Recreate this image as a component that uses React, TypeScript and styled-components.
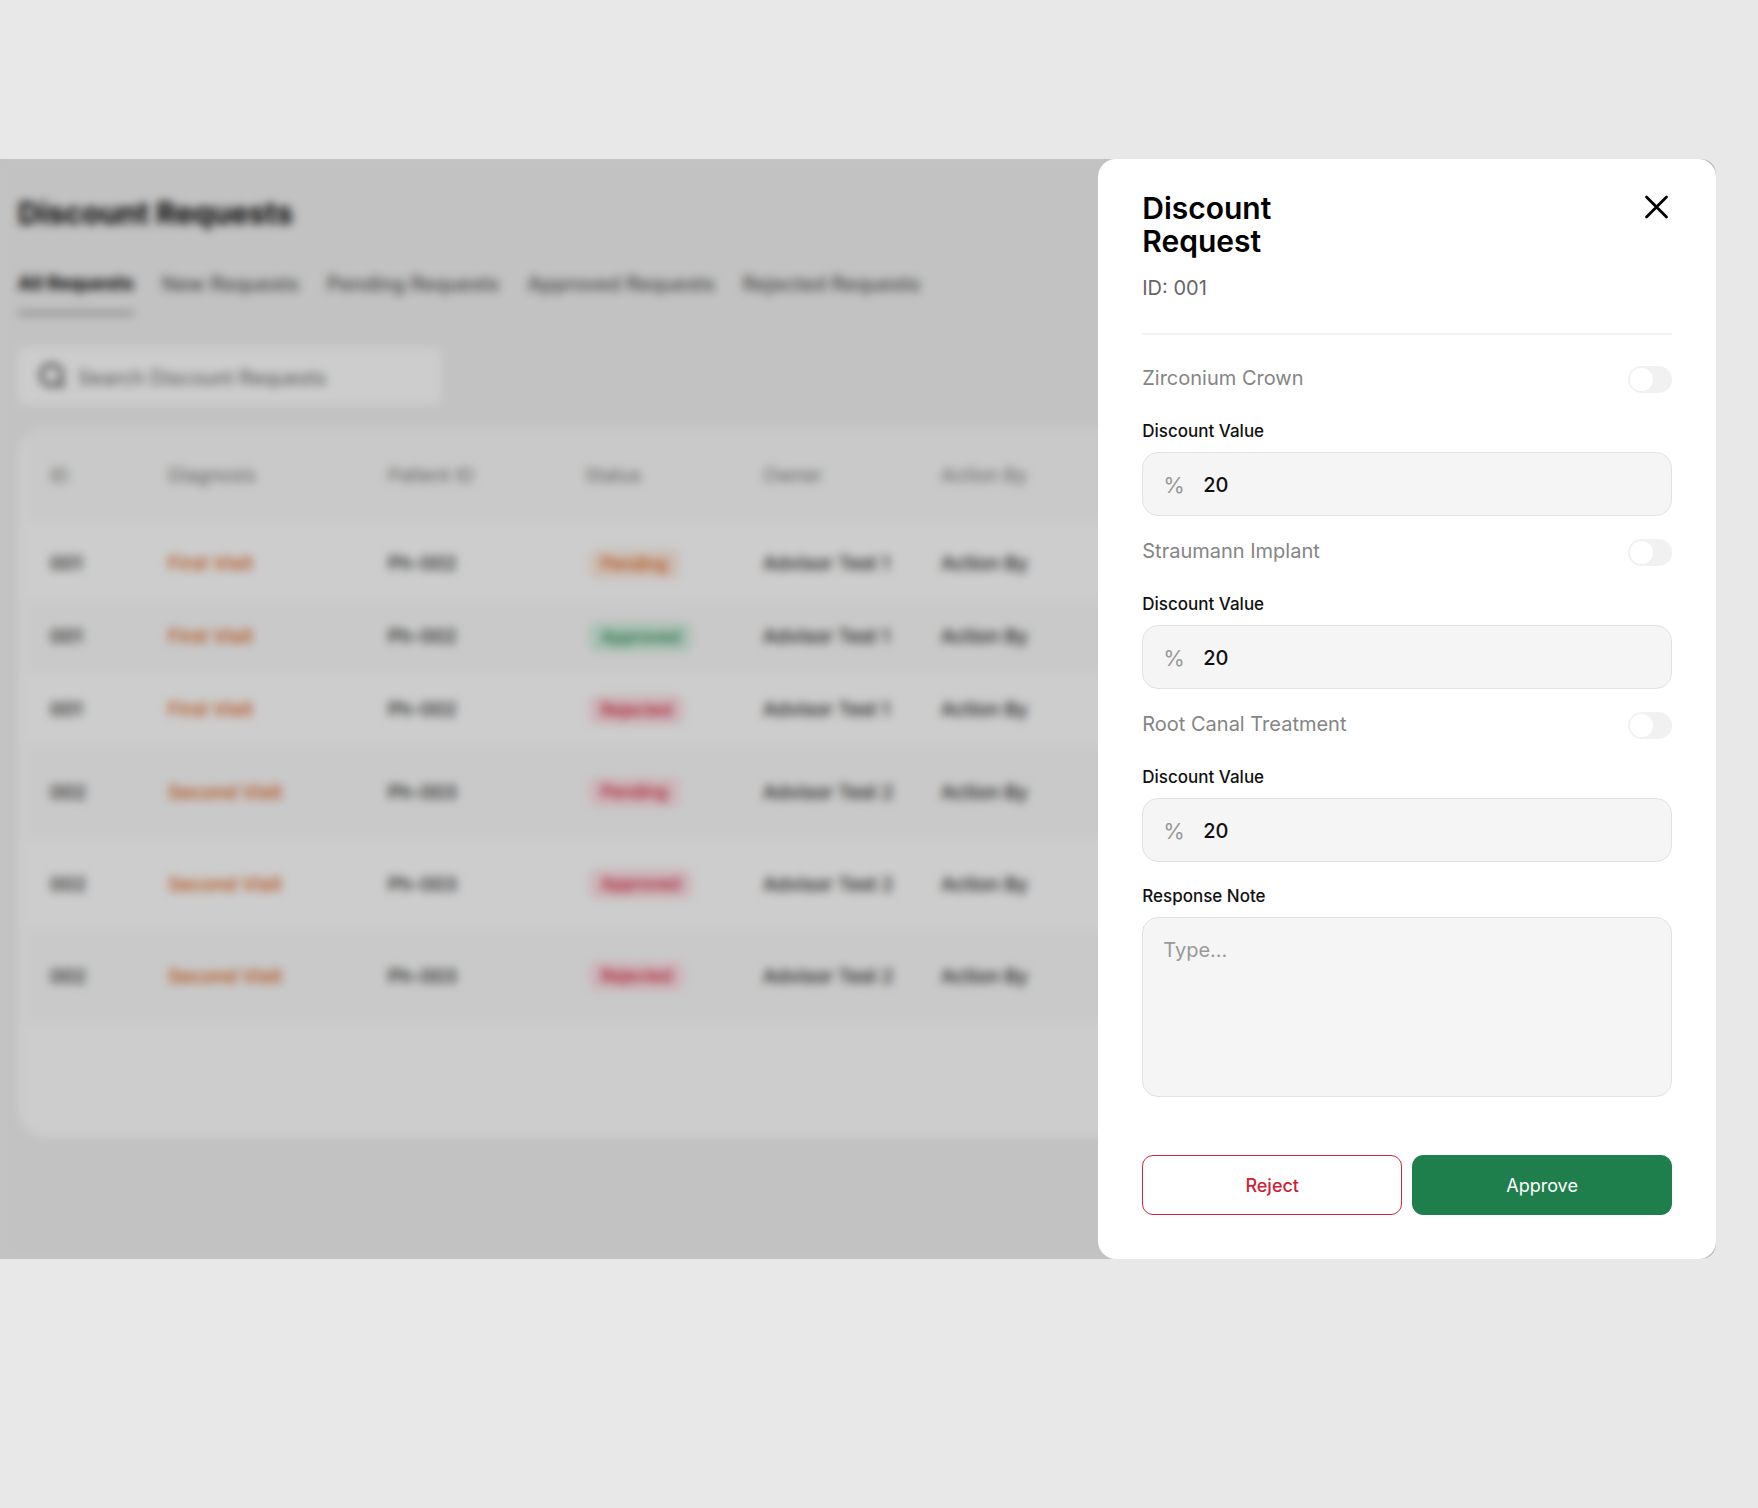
import React, { useState } from "react";
import styled, { createGlobalStyle } from "styled-components";

const GlobalStyle = createGlobalStyle`
  *, *::before, *::after { box-sizing: border-box; }
  body { margin: 0; background: #e8e8e8; }
  body, button, input, textarea { font-family: Inter, "Liberation Sans", sans-serif; }
`;

const Stage = styled.div`
  padding: 159px 42px 159px 0;
`;

const Frame = styled.div`
  display: grid;
  position: relative;
  overflow: hidden;
  background: #efefef;
  border-radius: 0 14px 14px 0;
`;

const Page = styled.main`
  grid-area: 1 / 1;
  min-width: 0;
  padding: 34px 18px 0;
`;

const PageTitle = styled.h1`
  margin: 0 0 39px;
  font-size: 30px;
  line-height: 40px;
  font-weight: 700;
  color: #000;
`;

const Tabs = styled.nav`
  display: flex;
  gap: 28px;
  margin-bottom: 32px;
`;

const Tab = styled.button<{ $active?: boolean }>`
  padding: 0 0 15px;
  border: 0;
  border-bottom: 4px solid ${(p) => (p.$active ? "#a4a4a4" : "transparent")};
  background: none;
  font-size: ${(p) => (p.$active ? 19 : 20)}px;
  line-height: 24px;
  font-weight: ${(p) => (p.$active ? 700 : 500)};
  color: ${(p) => (p.$active ? "#000" : "#555")};
  white-space: nowrap;
`;

const SearchBox = styled.label`
  display: flex;
  align-items: center;
  gap: 12px;
  width: 423px;
  height: 58px;
  margin-bottom: 22px;
  padding: 0 20px;
  border-radius: 8px;
  background: #fdfdfd;
  color: #3c3c3c;
`;

const SearchInput = styled.input`
  flex: 1;
  min-width: 0;
  padding: 3px 0 0;
  border: 0;
  background: none;
  font-size: 20px;
  &::placeholder { color: #666; opacity: 1; }
`;

const Card = styled.section`
  padding: 0 8px 115px;
  border-radius: 28px;
  background: #fdfdfd;
  overflow: hidden;
`;

const Table = styled.table`
  width: 100%;
  table-layout: fixed;
  border-spacing: 0;
  font-size: 19px;
  text-align: left;
`;

const Col = styled.col<{ $width?: number }>`
  width: ${(p) => (p.$width ? `${p.$width}px` : "auto")};
`;

const HeadCell = styled.th`
  height: 100px;
  padding: 0 0 0 24px;
  border-bottom: 4px solid #fdfdfd;
  background: #f8f8f8;
  font-weight: 400;
  color: #777;
`;

const Row = styled.tr<{ $tall?: boolean }>`
  height: ${(p) => (p.$tall ? 92 : 73)}px;
  &:nth-child(even) { background: #f8f8f8; }
`;

const Cell = styled.td<{ $accent?: boolean }>`
  padding: 0 0 0 24px;
  font-weight: 500;
  color: ${(p) => (p.$accent ? "#d9560b" : "#222")};
`;

type Tone = "orange" | "green" | "red";
const tones: Record<Tone, [string, string]> = {
  orange: ["#d9560b", "#fbeadf"],
  green: ["#1f7f4c", "#d2eedf"],
  red: ["#d0122f", "#fbdfe4"],
};

const Pill = styled.span<{ $tone: Tone }>`
  display: inline-block;
  margin-left: 4px;
  padding: 4px 12px;
  border-radius: 8px;
  font-size: 17px;
  line-height: 22px;
  color: ${(p) => tones[p.$tone][0]};
  background: ${(p) => tones[p.$tone][1]};
`;

const Scrim = styled.div`
  position: absolute;
  inset: 0;
  background: rgba(0, 0, 0, 0.19);
  backdrop-filter: blur(5px);
`;

const Drawer = styled.aside`
  grid-area: 1 / 1;
  justify-self: end;
  position: relative;
  width: 36%;
  padding: 33px 44px 44px;
  border-radius: 18px;
  background: #fff;
`;

const DrawerHead = styled.header`
  display: flex;
  justify-content: space-between;
  align-items: flex-start;
  padding-bottom: 33px;
  border-bottom: 2px solid #f3f3f3;
  margin-bottom: 31px;
`;

const DrawerTitle = styled.h2`
  max-width: 160px;
  margin: 0 0 18px;
  font-size: 30px;
  line-height: 33px;
  font-weight: 600;
  color: #000;
`;

const RequestId = styled.p`
  margin: 0;
  font-size: 20px;
  line-height: 24px;
  color: #666;
`;

const CloseButton = styled.button`
  display: flex;
  margin: 0;
  padding: 1px 2px;
  border: 0;
  background: none;
  color: #000;
`;

const Treatment = styled.section`
  margin-bottom: 23px;
`;

const SwitchRow = styled.label`
  display: flex;
  justify-content: space-between;
  align-items: flex-start;
  height: 27px;
  margin-bottom: 27px;
  font-size: 20px;
  line-height: 24px;
  color: #858585;
`;

const Switch = styled.input`
  appearance: none;
  width: 44px;
  height: 27px;
  margin: 0;
  padding: 2px;
  border-radius: 14px;
  background: #f1f1f1;
  &::before {
    content: "";
    display: block;
    width: 23px;
    height: 23px;
    border-radius: 50%;
    background: #fff;
  }
  &:checked { background: #1f7f4c; }
  &:checked::before { margin-left: auto; }
`;

const FieldLabel = styled.label`
  display: block;
  margin-bottom: 10px;
  font-size: 17px;
  line-height: 22px;
  font-weight: 500;
  color: #111;
`;

const ValueBox = styled.div`
  display: flex;
  align-items: center;
  gap: 16px;
  height: 64px;
  padding: 2px 20px 0;
  border: 1px solid #e2e2e2;
  border-radius: 16px;
  background: #f5f5f5;
`;

const Unit = styled.span`
  width: 24px;
  font-size: 22px;
  color: #999;
`;

const ValueInput = styled.input`
  flex: 1;
  min-width: 0;
  padding: 0;
  border: 0;
  background: none;
  font-size: 20px;
  font-weight: 500;
  color: #111;
`;

const NoteInput = styled.textarea`
  display: block;
  width: 100%;
  height: 180px;
  margin-bottom: 58px;
  padding: 20px;
  border: 1px solid #e2e2e2;
  border-radius: 16px;
  background: #f5f5f5;
  font-size: 20px;
  line-height: 24px;
  resize: none;
  &::placeholder { color: #999; opacity: 1; }
`;

const Actions = styled.footer`
  display: grid;
  grid-template-columns: 1fr 1fr;
  gap: 10px;
`;

const ActionButton = styled.button<{ $primary?: boolean }>`
  height: 60px;
  border: 1px solid ${(p) => (p.$primary ? "#1f7f4c" : "#c8283f")};
  border-radius: 11px;
  background: ${(p) => (p.$primary ? "#1f7f4c" : "#fff")};
  font-size: 18px;
  font-weight: ${(p) => (p.$primary ? 400 : 500)};
  color: ${(p) => (p.$primary ? "#fff" : "#cc2238")};
`;

const tabs = ["All Requests", "New Requests", "Pending Requests", "Approved Requests", "Rejected Requests"];
const columns = ["ID", "Diagnosis", "Patient ID", "Status", "Owner", "Action By"];
const widths = [118, 220, 197, 178, 178];
const treatments = ["Zirconium Crown", "Straumann Implant", "Root Canal Treatment"];

const rows: { id: string; visit: string; patient: string; status: string; tone: Tone; owner: string }[] = [
  { id: "001", visit: "First Visit", patient: "Ph-002", status: "Pending", tone: "orange", owner: "Advisor Test 1" },
  { id: "001", visit: "First Visit", patient: "Ph-002", status: "Approved", tone: "green", owner: "Advisor Test 1" },
  { id: "001", visit: "First Visit", patient: "Ph-002", status: "Rejected", tone: "red", owner: "Advisor Test 1" },
  { id: "002", visit: "Second Visit", patient: "Ph-003", status: "Pending", tone: "red", owner: "Advisor Test 2" },
  { id: "002", visit: "Second Visit", patient: "Ph-003", status: "Approved", tone: "red", owner: "Advisor Test 2" },
  { id: "002", visit: "Second Visit", patient: "Ph-003", status: "Rejected", tone: "red", owner: "Advisor Test 2" },
];

function TreatmentFields({ name, index }: { name: string; index: number }) {
  const [value, setValue] = useState("20");
  const [on, setOn] = useState(false);
  return (
    <Treatment>
      <SwitchRow>
        {name}
        <Switch type="checkbox" role="switch" checked={on} onChange={() => setOn(!on)} />
      </SwitchRow>
      <FieldLabel htmlFor={`discount-${index}`}>Discount Value</FieldLabel>
      <ValueBox>
        <Unit>%</Unit>
        <ValueInput id={`discount-${index}`} value={value} onChange={(e) => setValue(e.target.value)} />
      </ValueBox>
    </Treatment>
  );
}

export default function App() {
  return (
    <Stage>
      <GlobalStyle />
      <Frame>
        <Page>
          <PageTitle>Discount Requests</PageTitle>
          <Tabs>
            {tabs.map((t, i) => (
              <Tab key={t} $active={i === 0}>{t}</Tab>
            ))}
          </Tabs>
          <SearchBox>
            <svg width="28" height="28" viewBox="0 0 28 28" fill="none" stroke="currentColor" strokeWidth="3" strokeLinecap="round">
              <circle cx="13.5" cy="13" r="10.5" />
              <path d="M21 20.5 25.5 25" />
            </svg>
            <SearchInput aria-label="Search" placeholder="Search Discount Requests" />
          </SearchBox>
          <Card>
            <Table>
              <colgroup>
                {columns.map((c, i) => (
                  <Col key={c} $width={widths[i]} />
                ))}
              </colgroup>
              <thead>
                <tr>
                  {columns.map((c) => (
                    <HeadCell key={c} scope="col">{c}</HeadCell>
                  ))}
                </tr>
              </thead>
              <tbody>
                {rows.map((r, i) => (
                  <Row key={i} $tall={i > 2}>
                    <Cell>{r.id}</Cell>
                    <Cell $accent>{r.visit}</Cell>
                    <Cell>{r.patient}</Cell>
                    <Cell><Pill $tone={r.tone}>{r.status}</Pill></Cell>
                    <Cell>{r.owner}</Cell>
                    <Cell>Action By</Cell>
                  </Row>
                ))}
              </tbody>
            </Table>
          </Card>
        </Page>
        <Scrim />
        <Drawer role="dialog" aria-labelledby="drawer-title">
          <DrawerHead>
            <div>
              <DrawerTitle id="drawer-title">Discount Request</DrawerTitle>
              <RequestId>ID: 001</RequestId>
            </div>
            <CloseButton aria-label="Close">
              <svg width="28" height="28" viewBox="0 0 28 28" fill="none" stroke="currentColor" strokeWidth="2.8" strokeLinecap="round">
                <path d="M4.5 4 24.5 24M24.5 4 4.5 24" />
              </svg>
            </CloseButton>
          </DrawerHead>
          {treatments.map((t, i) => (
            <TreatmentFields key={t} name={t} index={i} />
          ))}
          <FieldLabel htmlFor="note">Response Note</FieldLabel>
          <NoteInput id="note" placeholder="Type..." />
          <Actions>
            <ActionButton>Reject</ActionButton>
            <ActionButton $primary>Approve</ActionButton>
          </Actions>
        </Drawer>
      </Frame>
    </Stage>
  );
}
